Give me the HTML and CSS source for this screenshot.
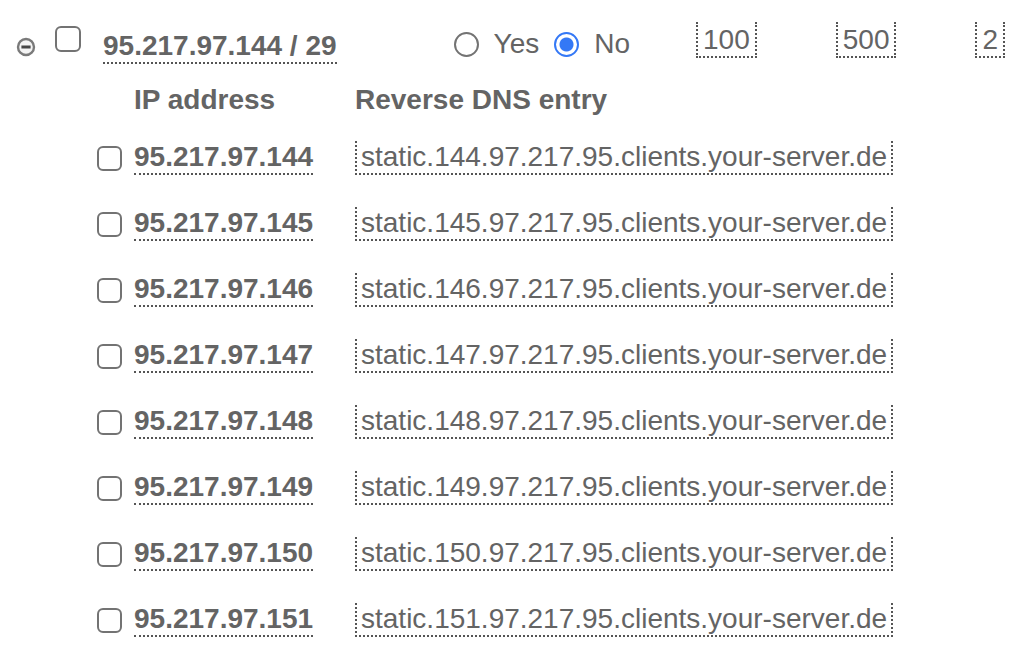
FILE: index.html
```html
<!DOCTYPE html>
<html lang="en">
<head>
  <meta charset="UTF-8" />
  <title>Subnet</title>
  <link rel="stylesheet" href="styles.css">
</head>
<body>
  <div class="subnet">
    <span class="toggle">
      <svg width="20" height="20" viewBox="0 0 20 20">
        <circle cx="10" cy="10" r="8" fill="#f4f4f4" stroke="#7a7a7a" stroke-width="2.4"/>
        <line x1="5.4" y1="10" x2="14.6" y2="10" stroke="#474747" stroke-width="3"/>
      </svg>
    </span>
    <input type="checkbox" class="check top-check">
    <span class="subnet-name">95.217.97.144 / 29</span>
    <div class="choice">
      <label class="opt"><input type="radio" name="rdns" class="radio"> Yes</label>
      <label class="opt opt-no"><input type="radio" name="rdns" class="radio" checked> No</label>
    </div>
    <span class="num num-first">100</span>
    <span class="num">500</span>
    <span class="num">2</span>
  </div>

  <div class="ips">
    <div></div>
    <div class="head">IP address</div>
    <div class="head">Reverse DNS entry</div>

    <input type="checkbox" class="check">
    <span class="ip">95.217.97.144</span>
    <span class="dns">static.144.97.217.95.clients.your-server.de</span>

    <input type="checkbox" class="check">
    <span class="ip">95.217.97.145</span>
    <span class="dns">static.145.97.217.95.clients.your-server.de</span>

    <input type="checkbox" class="check">
    <span class="ip">95.217.97.146</span>
    <span class="dns">static.146.97.217.95.clients.your-server.de</span>

    <input type="checkbox" class="check">
    <span class="ip">95.217.97.147</span>
    <span class="dns">static.147.97.217.95.clients.your-server.de</span>

    <input type="checkbox" class="check">
    <span class="ip">95.217.97.148</span>
    <span class="dns">static.148.97.217.95.clients.your-server.de</span>

    <input type="checkbox" class="check">
    <span class="ip">95.217.97.149</span>
    <span class="dns">static.149.97.217.95.clients.your-server.de</span>

    <input type="checkbox" class="check">
    <span class="ip">95.217.97.150</span>
    <span class="dns">static.150.97.217.95.clients.your-server.de</span>

    <input type="checkbox" class="check">
    <span class="ip">95.217.97.151</span>
    <span class="dns">static.151.97.217.95.clients.your-server.de</span>
  </div>
</body>
</html>
```

FILE: styles.css
```css
body {
  margin: 0;
  padding: 22px 0 0 16px;
  background: #fff;
  color: #646464;
  font-family: "Liberation Sans", Arial, sans-serif;
  font-size: 28px;
  line-height: 32px;
}

.subnet {
  display: flex;
  align-items: flex-start;
}

.toggle {
  margin-top: 15px;
  width: 20px;
  height: 20px;
}

.toggle svg {
  display: block;
  filter: blur(0.4px);
}

.check {
  appearance: none;
  margin: 0;
  width: 25px;
  height: 25px;
  border: 2px solid #737373;
  border-radius: 6px;
  background: #fff;
}

.top-check {
  width: 26px;
  height: 26px;
  margin: 4px 0 0 19px;
}

.subnet-name {
  margin: 8px 0 0 22px;
  font-weight: bold;
  border-bottom: 2px dotted #555;
}

.choice {
  display: flex;
  margin: 6px 0 0 117px;
}

.opt {
  display: flex;
  align-items: center;
  gap: 15px;
}

.opt-no {
  margin-left: 15px;
}

.radio {
  appearance: none;
  margin: 0;
  width: 25px;
  height: 25px;
  border: 2px solid #737373;
  border-radius: 50%;
  background: #fff;
}

.radio:checked {
  border-color: #3478f6;
  background: radial-gradient(circle, #3478f6 0 6.5px, #fff 7.5px);
}

.num {
  padding: 2px 5px 0;
  border: 2px dotted #555;
  border-top: none;
  margin-left: 79px;
}

.num-first {
  margin-left: 66px;
}

.ips {
  display: grid;
  grid-template-columns: 37px 221px auto;
  row-gap: 32px;
  align-items: center;
  justify-items: start;
  margin: 20px 0 0 81px;
}

.head {
  font-weight: bold;
  margin-bottom: -7px;
}

.ip {
  font-weight: bold;
  border-bottom: 2px dotted #555;
}

.dns {
  padding: 0 4px;
  border: 2px dotted #555;
  border-top: none;
}
```
